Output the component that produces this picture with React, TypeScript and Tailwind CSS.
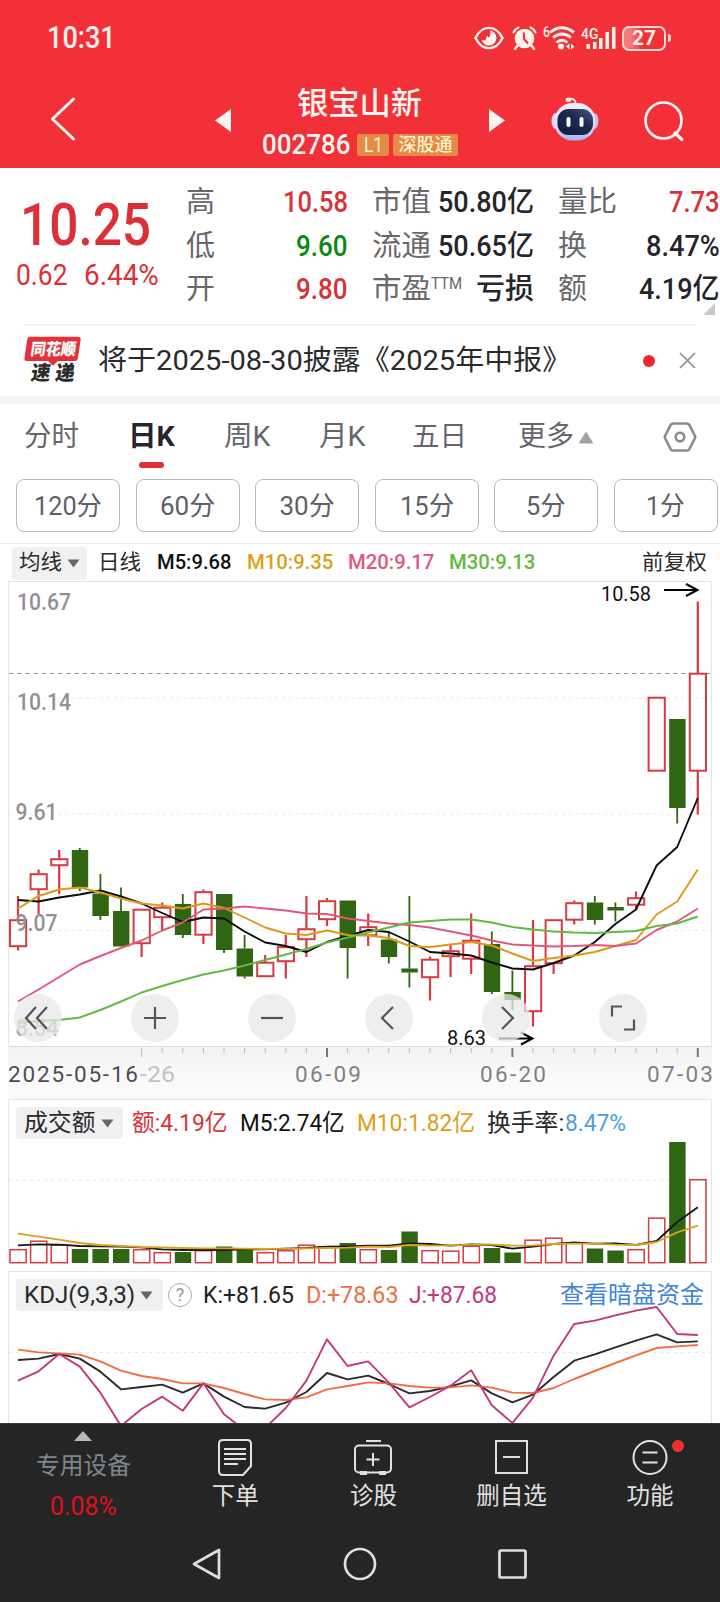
import React, { useLayoutEffect, useRef, useState } from "react";

/** Text whose glyphs are condensed or widened to fill an exact width. */
function Fit({ w, className = "", children }: { w: number; className?: string; children: React.ReactNode }) {
  const ref = useRef<HTMLSpanElement>(null);
  const [scale, setScale] = useState(1);
  useLayoutEffect(() => {
    if (ref.current) setScale(w / ref.current.offsetWidth);
  }, [w, children]);
  return (
    <span className={"inline-block shrink-0 whitespace-nowrap " + className} style={{ width: w }}>
      <span ref={ref} className="inline-block origin-left" style={{ transform: `scaleX(${scale})` }}>
        {children}
      </span>
    </span>
  );
}

const RED = "#d63a42";
const GREEN = "#2f6513";
const cx = (i: number) => 18 + 20.6 * i;

type Candle = [up: 0 | 1, high: number, top: number, bottom: number, low: number];
const candles: Candle[] = [
  [1, 896, 919.5, 946.5, 950.5], [1, 869.5, 873.5, 889.5, 914], [1, 850, 858.5, 865.5, 894], [0, 848, 850, 887.5, 891],
  [0, 874, 893.5, 916, 920], [0, 887.5, 911, 946.5, 946.5], [1, 909, 909, 943.5, 957], [1, 902.5, 907, 917.5, 930],
  [0, 894, 904, 935, 938], [1, 889.5, 891.5, 935, 944], [0, 894, 894, 950, 953], [0, 935, 948.5, 976.5, 978.5],
  [1, 955, 962, 976.5, 976.5], [1, 935, 946.5, 961.5, 978.5], [1, 896, 928.5, 939.5, 957], [1, 898, 900.5, 919.5, 926],
  [0, 900.5, 900.5, 948, 978.5], [1, 913.5, 926.5, 935.5, 946], [0, 931.5, 939.5, 957, 963.5], [0, 896, 968.5, 972.5, 987.5],
  [1, 956.5, 959, 977.5, 1000.5], [1, 944, 950.5, 956.5, 977], [1, 913.5, 940, 959, 974], [0, 931.5, 944, 992, 994],
  [0, 970.5, 992, 1000, 1010], [1, 920, 965.5, 1011.5, 1026.5], [1, 919.5, 919.5, 963.5, 974], [1, 900.5, 902.5, 920, 924.5],
  [0, 896, 902.5, 920, 924.5], [0, 902.5, 907, 910.5, 921.5], [1, 891.5, 897.5, 905, 910], [1, 697, 697, 771, 771],
  [0, 719, 719, 808, 823.5], [1, 601.5, 673, 771, 814.5],
];

const ma5 = [900, 901.5, 897.5, 894.5, 890.5, 896.5, 903.5, 913, 922, 917.5, 918.5, 931.5, 942.5, 946, 952, 942, 936, 930, 932, 941.5, 952, 953.5, 955.5, 962.5, 968.5, 969.5, 963, 955.5, 942, 924, 909.5, 865.5, 847, 798];
const ma10 = [908.5, 896, 889.5, 887.5, 892.5, 898.5, 903.5, 905.5, 908.5, 903.5, 908, 917.5, 927.5, 933.5, 935, 930.5, 935, 935.5, 938, 946, 947, 944.5, 942, 945.5, 953.5, 961, 958, 955.5, 952, 946, 940, 914.5, 901.5, 869.5];
const ma20 = [1001.5, 989.5, 977, 964.5, 956, 948, 940.5, 930.5, 922.5, 909.5, 908.5, 906.5, 908.5, 910.5, 913.5, 914, 918.5, 921, 923.5, 925, 927.5, 931.5, 935.5, 940.5, 944.5, 945.5, 946.5, 946, 945, 946, 943.5, 930, 921.5, 908.5];
const ma30 = [1023, 1021, 1020, 1017.5, 1010, 1001.5, 992.5, 986, 980, 974.5, 970.5, 965.5, 960, 954.5, 949, 942.5, 937.5, 932.5, 927.5, 922.5, 921, 919.5, 919.5, 922.5, 927, 929.5, 931.5, 932.5, 933, 932, 931, 926, 923.5, 916.5];

const volTops = [1249, 1240.5, 1244.5, 1249, 1249, 1249, 1249, 1252, 1252, 1250, 1246.5, 1250, 1252, 1250, 1244.5, 1246, 1243, 1249, 1250, 1231.5, 1250, 1250.5, 1245.5, 1248, 1252.5, 1239.5, 1237.5, 1242.5, 1248.5, 1250.5, 1249, 1217.5, 1142, 1179];
const third = (v: number) => 1090 + v / 3;
const vol5 = [466, 463, 464, 468, 469, 470, 472, 478, 480, 480, 480, 478, 478, 476, 474, 470, 469, 467, 467, 460, 462, 467, 463, 465, 476, 470, 462, 457, 461, 460, 465, 453, 396, 352].map(third);
const vol10 = [431, 440, 449, 459, 465, 468, 471, 472, 474, 475, 475, 476, 477, 476, 475, 474, 473, 470, 471, 465, 467, 466, 464, 464, 467, 466, 462, 461, 461, 464, 465, 456, 427, 407].map(third);
const kLine = [810, 806, 792, 806, 845, 898, 891, 884, 908, 880, 920, 951, 956, 938, 906, 849, 868, 857, 882, 910, 903, 889, 871, 910, 937, 914, 861, 812, 793, 772, 752, 733, 757, 754].map(third);
const dLine = [779, 787, 790, 794, 814, 842, 858, 867, 880, 880, 894, 912, 928, 930, 922, 898, 888, 877, 880, 888, 893, 892, 886, 893, 908, 909, 894, 867, 843, 819, 796, 774, 769, 765].map(third);
const jLine = [872, 844, 792, 830, 908, 1008, 957, 920, 962, 880, 973, 1020, 1014, 954, 872, 748, 828, 814, 878, 952, 921, 887, 841, 946, 999, 923, 797, 702, 692, 676, 662, 651, 732, 735].map(third);

function Line({ data, color }: { data: number[]; color: string }) {
  return (
    <polyline
      fill="none"
      stroke={color}
      strokeWidth={1.9}
      strokeLinejoin="round"
      points={data.map((y, i) => `${cx(i)},${y}`).join(" ")}
    />
  );
}

type LabelProps = { x: number; y: number; w: number; size: number; fill: string; spaced?: boolean; children: string };
function Label({ x, y, w, size, fill, spaced = false, children }: LabelProps) {
  return (
    <text x={x} y={y} textLength={w} lengthAdjust={spaced ? "spacing" : "spacingAndGlyphs"} fontSize={size} fill={fill}>
      {children}
    </text>
  );
}

function StatusBar() {
  return (
    <div className="flex h-[76px] items-center pl-[47px] text-[#fff3ec]">
      <Fit w={69} className="mr-[358px] text-[31px] font-medium">10:31</Fit>
      <svg width="30" height="24" viewBox="0 0 30 24" fill="none">
        <path d="M1.500 12C8-1.500 22-1.500 28.500 12C22 25.500 8 25.500 1.500 12Z" stroke="currentColor" strokeWidth="2.400" />
        <path d="M16 4.500a7.500 7.500 0 1 1-8.300 9.300c1.800 1.200 3.600.800 4.300-.800.600-1.300.300-2.700 1.600-3.300.300 1 .500 1.500 1.300 2 1.700-2.200 1.800-4.700 1.100-7.200Z" fill="currentColor" />
      </svg>
      <svg className="ml-2" width="25" height="24" viewBox="0 0 25 24" fill="none" stroke="currentColor">
        <circle cx="12.500" cy="12.500" r="9.800" fill="currentColor" stroke="none" />
        <path d="M1.500 6.500Q3 3 6.500 1.500M23.500 6.500Q22 3 18.500 1.500" strokeWidth="2" strokeLinecap="round" />
        <path d="m6 19-3 4M19 19l3 4" strokeWidth="2.500" strokeLinecap="round" />
        <path d="M12 6.500V13l4 4.500" stroke="#f13037" strokeWidth="2" />
      </svg>
      <div className="ml-[6px] flex w-[33px] items-start">
        <Fit w={7} className="-mt-[1px] text-[14px] leading-[16px] font-medium">6</Fit>
        <svg className="-ml-[1px] shrink-0" width="27" height="26" viewBox="6 0 27 26" fill="none" stroke="currentColor" strokeWidth="2.900">
          <path d="M7 7.500Q18.500-2 31 7.500M10 12.700Q19 5.500 28 12.700M13.500 17.500Q19 13 24.500 17.500" />
          <circle cx="18" cy="21.500" r="3" fill="currentColor" stroke="none" />
          <path d="m26.500 18.500-3.500 3 3.500 3ZM28 18.500l3.500 3-3.500 3Z" fill="currentColor" stroke="none" />
        </svg>
      </div>
      <div className="ml-[5px] flex h-[24px] w-[35px] items-start">
        <Fit w={17} className="-mt-[1px] text-[15.5px] leading-[18px] font-medium">4G</Fit>
        <svg className="-ml-[17px] shrink-0" width="35" height="24" viewBox="0 0 35 24" fill="currentColor">
          <path d="M5.500 18h3.500v5h-3.500zM12 16h3.500v7H12zM18 12h3.500v11H18zM24.500 6H28v17h-3.500zM31 1h3.500v22H31z" />
        </svg>
      </div>
      <div className="ml-[6px] flex h-[25px] w-[44px] items-center justify-center rounded-[7px] border-2 border-[#ffd9d2] bg-linear-to-r from-[#f67c7c] from-15% to-[#f13037] to-45%">
        <Fit w={24} className="text-[20px] leading-none font-bold">27</Fit>
      </div>
      <div className="ml-[2px] h-[8px] w-[3px] rounded-r bg-[#ffd9d2]" />
    </div>
  );
}

function Robot() {
  return (
    <svg width="48" height="46" viewBox="0 0 48 46">
      <defs>
        <linearGradient id="shell" x1="0" y1="0" x2="0" y2="1">
          <stop offset="0" stopColor="#f6effb" />
          <stop offset="0.650" stopColor="#e3d6f3" />
          <stop offset="1" stopColor="#a7b0f2" />
        </linearGradient>
        <linearGradient id="face" x1="0" y1="1" x2="1" y2="0">
          <stop offset="0" stopColor="#0f1b3c" />
          <stop offset="0.600" stopColor="#1d2a50" />
          <stop offset="1" stopColor="#4a5a8c" />
        </linearGradient>
      </defs>
      <path d="M17 3.500c4-2 8 0 7.500 4.500" fill="none" stroke="#f4ecf8" strokeWidth="1.800" />
      <ellipse cx="17.500" cy="3.800" rx="3" ry="2.300" fill="#fbe3ea" />
      <ellipse cx="5" cy="25" rx="4.500" ry="8" fill="#e2d8f2" />
      <ellipse cx="43" cy="25" rx="4.500" ry="8" fill="#cbbcec" />
      <rect x="3.500" y="7" width="41" height="37.500" rx="18" fill="url(#shell)" />
      <rect x="6.500" y="13" width="35.500" height="26" rx="11" fill="url(#face)" />
      <rect x="15.500" y="21" width="4" height="10" rx="2" fill="#fff" />
      <rect x="28.500" y="21" width="4" height="10" rx="2" fill="#fff" />
    </svg>
  );
}

function TitleBar() {
  return (
    <div className="flex h-[92px] items-start pl-[50px] text-[#fff6f2]">
      <svg className="mt-[21px]" width="26" height="44" viewBox="0 0 26 44" fill="none">
        <path d="M23.500 2 2.500 22l21 20" stroke="currentColor" strokeWidth="3" strokeLinecap="round" strokeLinejoin="round" />
      </svg>
      <svg className="mt-[33px] ml-[139px]" width="16" height="23" viewBox="0 0 16 23" fill="currentColor">
        <path d="M16 0v23L0 11.500Z" />
      </svg>
      <div className="ml-[31px] flex w-[196px] flex-col">
        <div className="flex h-[52px] items-center pt-[4px] pl-[35px]">
          <Fit w={125} className="text-[31px] font-medium">银宝山新</Fit>
        </div>
        <div className="flex h-[34px] items-center">
          <Fit w={88} className="text-[28px] leading-8 font-medium">002786</Fit>
          <div className="ml-[7px] flex h-[22px] w-[32px] items-center justify-center rounded-[2px] bg-[#e58b47] text-[#fdf3cf]">
            <Fit w={19} className="text-[20px] leading-none">L1</Fit>
          </div>
          <div className="ml-[4px] flex h-[22px] w-[65px] shrink-0 items-center justify-center rounded-[2px] bg-[#e58b47] text-[#fdf3cf]">
            <Fit w={54} className="text-[18px] leading-none font-medium">深股通</Fit>
          </div>
        </div>
      </div>
      <svg className="mt-[33px] ml-[31px]" width="16" height="23" viewBox="0 0 16 23" fill="currentColor">
        <path d="M0 0v23L16 11.500Z" />
      </svg>
      <div className="mt-[20px] ml-[46px]"><Robot /></div>
      <svg className="mt-[24px] ml-[44px]" width="42" height="42" viewBox="0 0 42 42" fill="none" stroke="currentColor" strokeWidth="2.700" strokeLinecap="round">
        <circle cx="20.500" cy="20.500" r="18" />
        <path d="m32 33 7 6.500" strokeWidth="3.200" />
      </svg>
    </div>
  );
}

function Stat({ label, lw, value, w, color = "text-[#26262a]", sup = false }: { label: string; lw: number; value: string; w: number; color?: string; sup?: boolean }) {
  return (
    <div className="flex h-[43.5px] items-center justify-between text-[29px] leading-[43px]">
      <div className="flex text-[#68686c]">
        <Fit w={lw}>{label}</Fit>
        {sup && <Fit w={31} className="-mt-[6px] text-[17px]">TTM</Fit>}
      </div>
      <Fit w={w} className={"font-medium " + color}>{value}</Fit>
    </div>
  );
}

function Quote() {
  const red = "text-[#d8323a]";
  return (
    <section className="relative flex h-[156px]">
      <div className="flex w-[187px] flex-col pt-[28px] pl-[16px] text-[#dc3038]">
        <Fit w={131} className="ml-[4px] text-[60px] leading-[58px] font-medium">10.25</Fit>
        <div className="flex pt-[5px] text-[29px] leading-[32px]">
          <Fit w={52}>0.62</Fit>
          <Fit w={75} className="ml-[16px]">6.44%</Fit>
        </div>
      </div>
      <div className="grid grid-cols-[161px_160px_160px] gap-x-[26px] pt-[13px]">
        <div className="-ml-px pl-0">
          <Stat label="高" lw={29} value="10.58" w={65} color={red} />
          <Stat label="低" lw={29} value="9.60" w={52} color="text-[#0a8a12]" />
          <Stat label="开" lw={29} value="9.80" w={52} color={red} />
        </div>
        <div className="-ml-[2px]">
          <Stat label="市值" lw={59} value="50.80亿" w={96} />
          <Stat label="流通" lw={59} value="50.65亿" w={96} />
          <Stat label="市盈" lw={59} value="亏损" w={58} sup />
        </div>
        <div className="-ml-[2px]">
          <Stat label="量比" lw={59} value="7.73" w={51} color={red} />
          <Stat label="换" lw={29} value="8.47%" w={74} />
          <Stat label="额" lw={29} value="4.19亿" w={81} />
        </div>
      </div>
      <svg className="absolute top-[135px] left-[703px]" width="12" height="12"><path d="M12 0v12H0Z" fill="#c9c9cb" /></svg>
    </section>
  );
}

function News() {
  return (
    <section className="mx-6 flex h-[72px] items-center border-t-2 border-[#f3f3f3] pb-[1px]">
      <svg width="60" height="52" viewBox="0 0 60 52" fontWeight="900" fontSize="17">
        <path d="M6 1h50q3 0 2.600 3l-3 20q-.500 2-3 2H35l-5 5-5-5H3q-3 0-2.500-3l3-20Q4 1 6 1Z" fill="#e5303a" />
        <g transform="skewX(-8)">
          <text x="9" y="20" fill="#fff" textLength="47" lengthAdjust="spacingAndGlyphs">同花顺</text>
          <text x="13" y="46" fill="#2b2b2b" fontSize="21" textLength="45" lengthAdjust="spacingAndGlyphs">速 递</text>
        </g>
      </svg>
      <Fit w={473} className="ml-[16px] text-[28px] text-[#2a2a2c]">将于2025-08-30披露《2025年中报》</Fit>
      <div className="ml-[72px] h-[12px] w-[12px] shrink-0 rounded-full bg-[#f0282c]" />
      <svg className="ml-[24px] shrink-0" width="17" height="17" viewBox="0 0 17 17" stroke="#8a8a8c" strokeWidth="1.600"><path d="m1 1 15 15M16 1 1 16" /></svg>
    </section>
  );
}

function Tabs() {
  return (
    <nav className="relative flex h-[75px] items-center pb-[9px] pl-[24px] text-[28px] text-[#66666a]">
      <Fit w={55}>分时</Fit>
      <Fit w={47} className="ml-[49px] font-bold text-[#26262a]">日K</Fit>
      <Fit w={47} className="ml-[49px]">周K</Fit>
      <Fit w={47} className="ml-[48px]">月K</Fit>
      <Fit w={55} className="ml-[46px]">五日</Fit>
      <Fit w={56} className="ml-[51px]">更多</Fit>
      <svg className="ml-[4px]" width="16" height="13"><path d="M8 0.500 15.500 12.500H.500Z" fill="#a2a2a4" /></svg>
      <svg className="ml-[69px]" width="34" height="30" viewBox="0 0 34 30" fill="none" stroke="#8b8b8d" strokeWidth="2.600" strokeLinejoin="round">
        <path d="M10 1.500h14q1.500 0 2.200 1.200L32 14q.500 1 0 2l-5.800 11.300q-.700 1.200-2.200 1.200H10q-1.500 0-2.200-1.200L2 16q-.500-1 0-2L7.800 2.700Q8.500 1.500 10 1.500Z" />
        <circle cx="17" cy="15" r="4.300" />
      </svg>
      <div className="absolute top-[57.5px] left-[139px] h-[6px] w-[25px] rounded-[3px] bg-[#dd3035]" />
    </nav>
  );
}

function Periods() {
  const items: [string, number][] = [["120分", 68], ["60分", 55], ["30分", 55], ["15分", 54], ["5分", 40], ["1分", 39]];
  return (
    <div className="flex h-[64px] gap-[15.5px] pl-[16px]">
      {items.map(([t, w]) => (
        <div key={t} className="flex h-[53px] w-[104px] shrink-0 items-center justify-center rounded-lg border border-[#b8b8ba] pt-[1px] text-[26px] text-[#606064]">
          <Fit w={w}>{t}</Fit>
        </div>
      ))}
    </div>
  );
}

function Caret({ className = "" }: { className?: string }) {
  return <svg className={className} width="13" height="9"><path d="M.500.500h12L6.500 8.500Z" fill="#66666a" /></svg>;
}

function MaRow() {
  return (
    <div className="flex h-[37px] items-center border-t border-[#ececec] pt-[2px] pl-[12px] text-[21px] font-medium">
      <div className="flex h-[33px] w-[75px] items-center rounded bg-[#f1f1f1] pl-[7px] font-normal text-[#2a2a2c]">
        <Fit w={43}>均线</Fit>
        <Caret className="ml-[5px]" />
      </div>
      <Fit w={43} className="ml-[11px] font-normal text-[#2a2a2c]">日线</Fit>
      <Fit w={74} className="ml-[16px] text-[#111]">M5:9.68</Fit>
      <Fit w={86} className="ml-[16px] text-[#dca01c]">M10:9.35</Fit>
      <Fit w={86} className="ml-[15px] text-[#e0597a]">M20:9.17</Fit>
      <Fit w={86} className="ml-[15px] text-[#62b943]">M30:9.13</Fit>
      <Fit w={65} className="ml-[107px] font-normal text-[#2a2a2c]">前复权</Fit>
    </div>
  );
}

type BoxProps = { i: number; top: number; bottom: number; up: boolean; stroke: number };
function Box({ i, top, bottom, up, stroke }: BoxProps) {
  return up ? (
    <rect x={cx(i) - 8} y={top + 0.7} width={16.2} height={Math.max(bottom - top - 1, 1)} fill="none" stroke={RED} strokeWidth={stroke} />
  ) : (
    <rect x={cx(i) - 8} y={top} width={16.4} height={bottom - top} fill={GREEN} />
  );
}

function Grid({ y }: { y: number }) {
  return <path d={`M9 ${y}H711`} stroke="#e9e9eb" strokeWidth="1.200" strokeDasharray="3 4" />;
}

const controls = [
  "m22 13-10 11 10 11M33 13 23 24l10 11",
  "M24 13v22M13 24h22",
  "M13 24h22",
  "m28 13-11 11 11 11",
  "m20 13 11 11-11 11",
  "M13 22.500v-10h10M35 25.500v10H25",
];

function KChart() {
  return (
    <section className="relative h-[519px]">
      <svg className="block" width="720" height="519" viewBox="0 580 720 519">
        <defs>
          <linearGradient id="axis" x1="0" y1="0" x2="0" y2="1">
            <stop offset="0" stopColor="#f2f2f3" />
            <stop offset="0.500" stopColor="#f9f9fa" />
            <stop offset="1" stopColor="#fbfbfb" />
          </linearGradient>
        </defs>
        <path d="M8.500 1046V581.500H711.500V1046" fill="none" stroke="#e4e4e6" />
        <rect x="8" y="1046" width="704" height="53" fill="url(#axis)" />
        <path d="M8 1046.500H712" stroke="#dededf" />
        <Grid y={698} />
        <Grid y={814} />
        <Grid y={930.5} />
        <path d="M9 673.500H711" stroke="#a09468" strokeWidth="1.100" strokeDasharray="4.200 4" />
        {candles.map(([up, high, top, bottom, low], i) => (
          <g key={i}>
            <path d={`M${cx(i)} ${high}V${top}M${cx(i)} ${bottom}V${low}`} stroke={up ? RED : GREEN} strokeWidth={up ? 2.2 : 1.8} />
            <Box i={i} top={top} bottom={bottom} up={up === 1} stroke={2} />
          </g>
        ))}
        <g fontWeight="500">
          <Label x={17} y={610} w={54} size={23.5} fill="#919193">10.67</Label>
          <Label x={17} y={709.5} w={54} size={23.5} fill="#919193">10.14</Label>
          <Label x={15.5} y={820} w={42} size={23.5} fill="#919193">9.61</Label>
          <Label x={15.5} y={931} w={42} size={23.5} fill="#919193">9.07</Label>
          <Label x={15.5} y={1036} w={43} size={23.5} fill="#a5a5a7">8.54</Label>
        </g>
        <Line data={ma5} color="#0c0c0c" />
        <Line data={ma10} color="#e0981a" />
        <Line data={ma20} color="#e0597a" />
        <Line data={ma30} color="#62b943" />
        <Label x={601} y={601} w={50} size={19.5} fill="#111">10.58</Label>
        <Label x={447} y={1044.5} w={39} size={19.5} fill="#111">8.63</Label>
        <path d="M664 590h33M686 584l11.500 6-11.500 6" fill="none" stroke="#000" strokeWidth="2" />
        <path d="M499 1038.500h33M521 1032.500l11.500 6-11.500 6" fill="none" stroke="#000" strokeWidth="2" />
        {candles.map((_, i) => {
          if (i < 6) return null;
          const major = i === 15 || i === 24 || i === 33;
          return (
            <path key={i} d={`M${cx(i)} 1048v${major || i === 6 ? 9 : 5}`} stroke={major ? "#77777a" : "#b9b9bc"} strokeWidth={major ? 2 : 1} />
          );
        })}
        <Label x={8} y={1082} w={130} size={22.5} fill="#4d4d50" spaced>2025-05-16</Label>
        <Label x={140} y={1082} w={35} size={22.5} fill="#c2c2c5">-26</Label>
        <Label x={295} y={1082} w={66} size={22.5} fill="#808083" spaced>06-09</Label>
        <Label x={480} y={1082} w={66} size={22.5} fill="#808083" spaced>06-20</Label>
        <Label x={647} y={1082} w={66} size={22.5} fill="#808083" spaced>07-03</Label>
      </svg>
      <div className="absolute top-[413.5px] left-[14px] flex gap-[69px]">
        {controls.map((d, i) => (
          <div key={i} className="h-[48px] w-[48px] rounded-full bg-[#e8e8e8]/75">
            <svg width="48" height="48" fill="none" stroke="#545456" strokeWidth="2.200"><path d={d} /></svg>
          </div>
        ))}
      </div>
    </section>
  );
}

function VolumePanel() {
  return (
    <section className="relative h-[172px]">
      <svg className="absolute inset-0" width="720" height="172" viewBox="0 1099 720 172">
        <path d="M8.500 1263V1099.500H711.500V1263" fill="none" stroke="#e4e4e6" />
        <Grid y={1180.5} />
        {volTops.map((top, i) => (
          <Box key={i} i={i} top={top} bottom={1263} up={candles[i][0] === 1} stroke={1.5} />
        ))}
        <Line data={vol5} color="#161616" />
        <Line data={vol10} color="#dca01c" />
      </svg>
      <div className="relative flex items-center pt-[8px] pl-[16px] text-[23.5px] leading-[32px]">
        <div className="flex h-[32px] w-[107px] items-center rounded bg-[#f0f0f0] pl-[8px] text-[#2a2a2c]">
          <Fit w={72}>成交额</Fit>
          <Caret className="ml-[5px]" />
        </div>
        <Fit w={96} className="ml-[9px] text-[#d8323a]">额:4.19亿</Fit>
        <Fit w={105} className="ml-[12px] text-[#111]">M5:2.74亿</Fit>
        <Fit w={118} className="ml-[12px] text-[#dca01c]">M10:1.82亿</Fit>
        <Fit w={77} className="ml-[12px] text-[#2a2a2c]">换手率:</Fit>
        <Fit w={61} className="ml-[1px] text-[#4aa0dc]">8.47%</Fit>
      </div>
    </section>
  );
}

function KdjPanel() {
  return (
    <section className="relative h-[152px] overflow-hidden">
      <svg className="absolute inset-0" width="720" height="152" viewBox="0 1271 720 152">
        <path d="M8.500 1423V1271.500H711.500V1423" fill="none" stroke="#e4e4e6" />
        <Grid y={1352.5} />
        <Line data={kLine} color="#2a2a2e" />
        <Line data={dLine} color="#ee6f42" />
        <Line data={jLine} color="#c2387a" />
      </svg>
      <div className="relative flex items-center pt-[8px] pl-[16px] text-[23.5px] leading-[32px]">
        <div className="flex h-[32px] w-[147px] items-center rounded bg-[#f0f0f0] pl-[8px] text-[#2a2a2c]">
          <Fit w={111}>KDJ(9,3,3)</Fit>
          <Caret className="ml-[5px]" />
        </div>
        <div className="ml-[5px] flex h-[24px] w-[24px] items-center justify-center rounded-full border-[1.5px] border-[#a9a9ab] text-[18px] text-[#98989a]">?</div>
        <Fit w={91} className="ml-[11px] text-[#222]">K:+81.65</Fit>
        <Fit w={92} className="ml-[12px] text-[#ee6f42]">D:+78.63</Fit>
        <Fit w={88} className="ml-[11px] text-[#c2387a]">J:+87.68</Fit>
        <Fit w={144} className="ml-[63px] text-[#4285d8]">查看暗盘资金</Fit>
      </div>
    </section>
  );
}

function Action({ label, w, children }: { label: string; w: number; children: React.ReactNode }) {
  return (
    <div className="flex w-[138.3px] flex-col items-center pt-[13px] text-[23.5px] text-[#e2e2e3]">
      <svg width="44" height="42" viewBox="0 0 44 42" fill="none" stroke="currentColor" strokeWidth="2">{children}</svg>
      <Fit w={w} className="leading-[34px]">{label}</Fit>
    </div>
  );
}

function Footer() {
  return (
    <footer className="h-[179px] border-t border-[#3a3a3a] bg-[#252525]">
      <div className="flex h-[102px]">
        <div className="flex w-[166px] flex-col items-center pt-[7px]">
          <svg width="18" height="10"><path d="M9 0l9 10H0Z" fill="#b9b9b9" /></svg>
          <Fit w={95} className="mt-[8px] text-[23.5px] leading-[34px] text-[#7f868e]">专用设备</Fit>
          <Fit w={67} className="mt-[6px] text-[26px] leading-[34px] text-[#e0101a]">0.08%</Fit>
        </div>
        <div className="relative flex">
          <Action label="下单" w={47}>
            <path d="M10 3h24q4 0 4 4v22l-8 9H10q-4 0-4-4V7q0-4 4-4Z" />
            <path d="M11 12h22M11 17h22M11 22h22M11 27h14" />
          </Action>
          <Action label="诊股" w={47}>
            <path d="M15 4h15" />
            <rect x="4" y="8.500" width="36" height="27" rx="4" />
            <path d="M22 16v13M15.500 22.500h13" />
            <path d="M9 36h7M28 36h7" strokeWidth="4" />
          </Action>
          <Action label="删自选" w={71}>
            <rect x="6" y="4" width="31" height="32" />
            <path d="M13 20h17" />
          </Action>
          <Action label="功能" w={47}>
            <circle cx="22" cy="20.500" r="16.500" />
            <path d="M14.500 15.500h15M14.500 25.500h15" />
          </Action>
          <div className="absolute top-[16px] left-[506px] h-[12px] w-[12px] rounded-full bg-[#ef3030]" />
        </div>
      </div>
      <div className="flex h-[76px] items-center pt-[1px] pl-[191px] text-[#dededf]">
        <svg className="mb-[2px]" width="31" height="34" viewBox="0 0 31 34" fill="none"><path d="M28 3v28L3 17Z" stroke="currentColor" strokeWidth="2.700" strokeLinejoin="round" /></svg>
        <svg className="mb-[2px] ml-[121px]" width="34" height="34" fill="none"><circle cx="17" cy="17" r="15" stroke="currentColor" strokeWidth="2.700" /></svg>
        <svg className="mb-[2px] ml-[120px]" width="31" height="32" fill="none"><rect x="2.500" y="2.500" width="26" height="27" rx="1.500" stroke="currentColor" strokeWidth="2.700" /></svg>
      </div>
    </footer>
  );
}

export default function App() {
  return (
    <main className="h-[1602px] w-[720px] overflow-hidden bg-white [font-family:Roboto,'Noto_Sans_CJK_SC',sans-serif]">
      <header className="h-[168px] bg-[#f13037]">
        <StatusBar />
        <TitleBar />
      </header>
      <Quote />
      <News />
      <div className="h-[8px] bg-[#f4f4f5]" />
      <Tabs />
      <Periods />
      <MaRow />
      <KChart />
      <VolumePanel />
      <KdjPanel />
      <Footer />
    </main>
  );
}
